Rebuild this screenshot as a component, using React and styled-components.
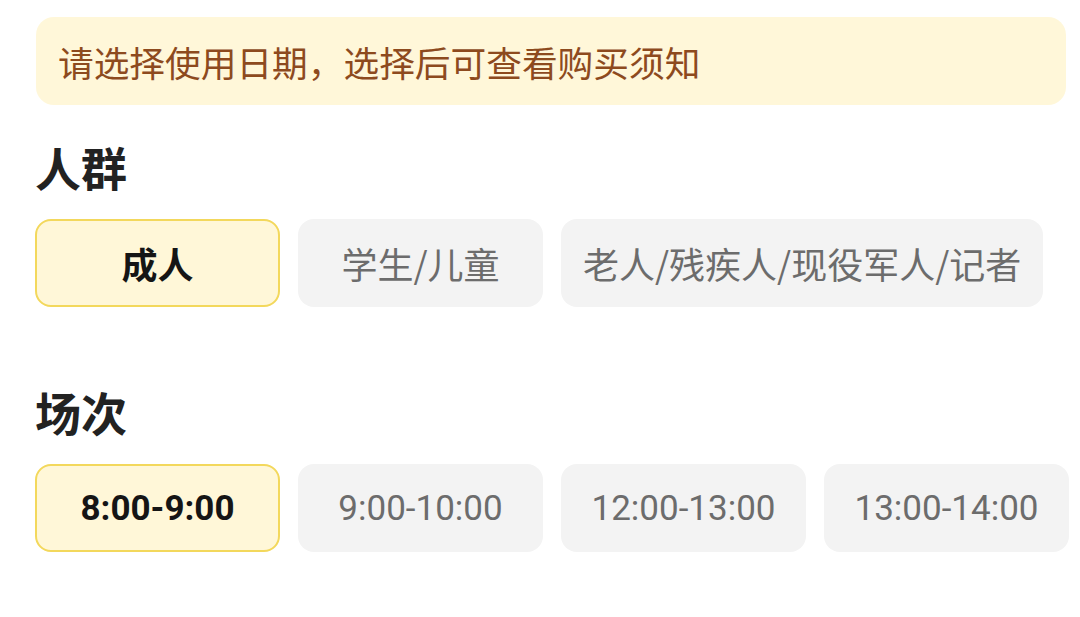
import React, { useState } from "react";
import styled, { createGlobalStyle, css } from "styled-components";

const GlobalStyle = createGlobalStyle`
  html, body {
    margin: 0;
    padding: 0;
    background: #ffffff;
  }
  body {
    font-family: Roboto, "Noto Sans CJK SC", sans-serif;
  }
`;

const Page = styled.div`
  display: flex;
  flex-direction: column;
  padding: 17px 9px 0 35px;
`;

const Notice = styled.div`
  box-sizing: border-box;
  width: 1030px;
  height: 88px;
  margin-left: 1px;
  display: flex;
  align-items: center;
  padding: 0 22px;
  border-radius: 18px;
  background: #fff7d9;
  color: #8d4a1e;
  font-size: 35.7px;
  font-family: "Noto Sans CJK SC", sans-serif;
`;

const Section = styled.section`
  display: flex;
  flex-direction: column;
  gap: 30px;
  margin-top: ${props => props.$top}px;
`;

const Title = styled.h2`
  margin: 0;
  font-family: "Noto Sans CJK SC", sans-serif;
  font-size: 46px;
  line-height: 46px;
  font-weight: 700;
  color: #222222;
`;

const Options = styled.div`
  display: flex;
  flex-wrap: wrap;
  gap: 18px;
`;

const Option = styled.button`
  box-sizing: border-box;
  min-width: 245px;
  height: 88px;
  padding: 0 20px;
  border: 2px solid transparent;
  border-radius: 16px;
  background: #f3f3f3;
  color: #6c6c6c;
  font-family: ${props =>
    props.$numeric ? `Roboto, "Noto Sans CJK SC", sans-serif` : `"Noto Sans CJK SC", sans-serif`};
  font-size: ${props => (props.$numeric ? 35 : 36)}px;
  font-weight: 400;
  cursor: pointer;

  ${props =>
    props.$active &&
    css`
      background: #fff7d8;
      border-color: #f3d85c;
      color: #151515;
      font-weight: 700;
    `}
`;

const groups = [
  {
    title: "人群",
    top: 38,
    numeric: false,
    items: ["成人", "学生/儿童", "老人/残疾人/现役军人/记者"],
  },
  {
    title: "场次",
    top: 81,
    numeric: true,
    items: ["8:00-9:00", "9:00-10:00", "12:00-13:00", "13:00-14:00"],
  },
];

function Group({ title, top, numeric, items }) {
  const [selected, setSelected] = useState(0);
  return (
    <Section $top={top}>
      <Title>{title}</Title>
      <Options>
        {items.map((item, i) => (
          <Option
            key={item}
            $numeric={numeric}
            $active={i === selected}
            onClick={() => setSelected(i)}
          >
            {item}
          </Option>
        ))}
      </Options>
    </Section>
  );
}

export default function App() {
  return (
    <>
      <GlobalStyle />
      <Page>
        <Notice>请选择使用日期，选择后可查看购买须知</Notice>
        {groups.map(group => (
          <Group key={group.title} {...group} />
        ))}
      </Page>
    </>
  );
}
